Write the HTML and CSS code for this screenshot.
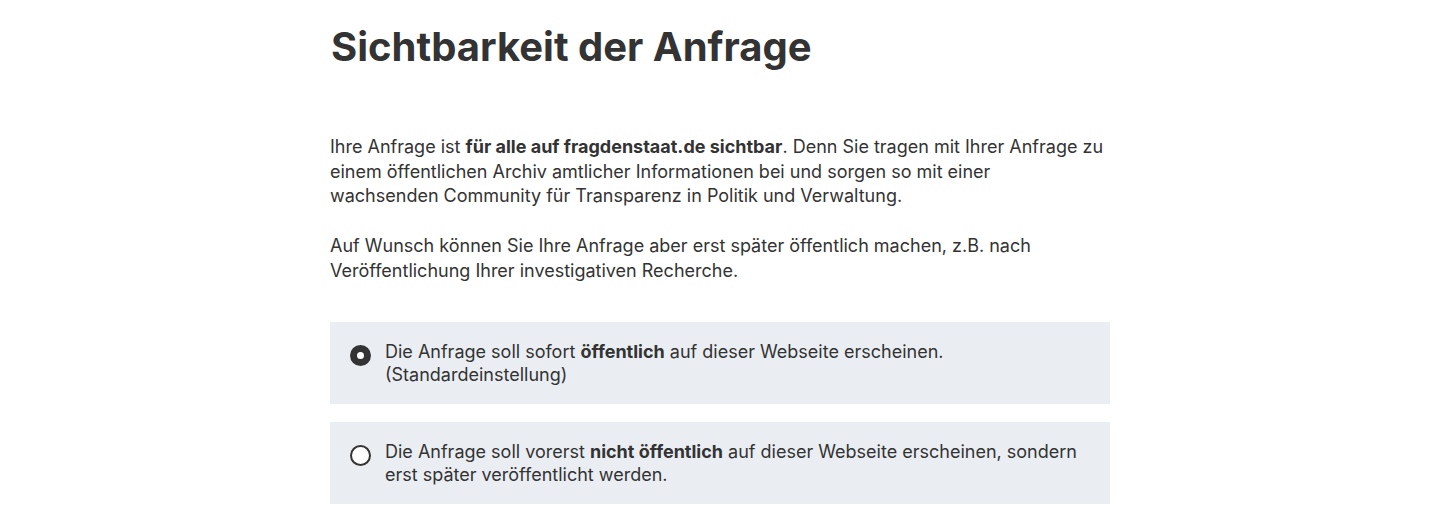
FILE: index.html
```html
<!DOCTYPE html>
<html lang="de">
<head>
  <meta charset="UTF-8" />
  <meta name="viewport" content="width=device-width, initial-scale=1.0" />
  <title>Sichtbarkeit der Anfrage</title>
  <link rel="stylesheet" href="styles.css">
</head>
<body>
  <div class="container">
    <h1>Sichtbarkeit der Anfrage</h1>

    <p>Ihre Anfrage ist <strong>für alle auf fragdenstaat.de sichtbar</strong>. Denn Sie tragen mit Ihrer Anfrage zu einem öffentlichen Archiv amtlicher Informationen bei und sorgen so mit einer <span class="nowrap">wachsenden Community</span> für Transparenz in Politik und Verwaltung.</p>

    <p>Auf Wunsch können Sie Ihre Anfrage aber erst später öffentlich machen, z.B. nach Veröffentlichung Ihrer investigativen Recherche.</p>

    <div class="options">
      <label class="option">
        <input type="radio" name="visibility" value="public" checked />
        <span>Die Anfrage soll sofort <strong>öffentlich</strong> auf dieser Webseite erscheinen. (Standardeinstellung)</span>
      </label>
      <label class="option">
        <input type="radio" name="visibility" value="private" />
        <span>Die Anfrage soll vorerst <strong>nicht öffentlich</strong> auf dieser Webseite erscheinen, sondern erst später veröffentlicht werden.</span>
      </label>
    </div>
  </div>
</body>
</html>
```

FILE: styles.css
```css
:root {
  --text-color: #333;
  --box-color: #eaeef2;
  --white: #fff;
}

* {
  box-sizing: border-box;
}

body {
  margin: 0;
  background: var(--white);
  color: var(--text-color);
  font-family: Inter, 'Noto Sans', sans-serif;
}

.container {
  width: 780px;
  margin: 0 auto;
  padding-top: 23px;
}

h1 {
  margin: 0 0 64px 1px;
  font-size: 40px;
  line-height: 48px;
  font-weight: 700;
}

p {
  margin: 0 0 25.5px 0;
  font-size: 18px;
  line-height: 24.5px;
}

strong {
  font-weight: 700;
}

.nowrap {
  white-space: nowrap;
}

.options {
  display: flex;
  flex-direction: column;
  gap: 18px;
  margin-top: 39px;
}

.option {
  display: flex;
  align-items: flex-start;
  gap: 14px;
  padding: 18px 20px;
  background: var(--box-color);
  font-size: 18px;
  line-height: 23px;
  cursor: pointer;
}

.option input {
  appearance: none;
  -webkit-appearance: none;
  flex: none;
  width: 21px;
  height: 21px;
  margin: 5px 0 0 0;
  border: 2.5px solid var(--text-color);
  border-radius: 50%;
  background: var(--white);
}

.option input:checked {
  border: 7px solid var(--text-color);
}
```
